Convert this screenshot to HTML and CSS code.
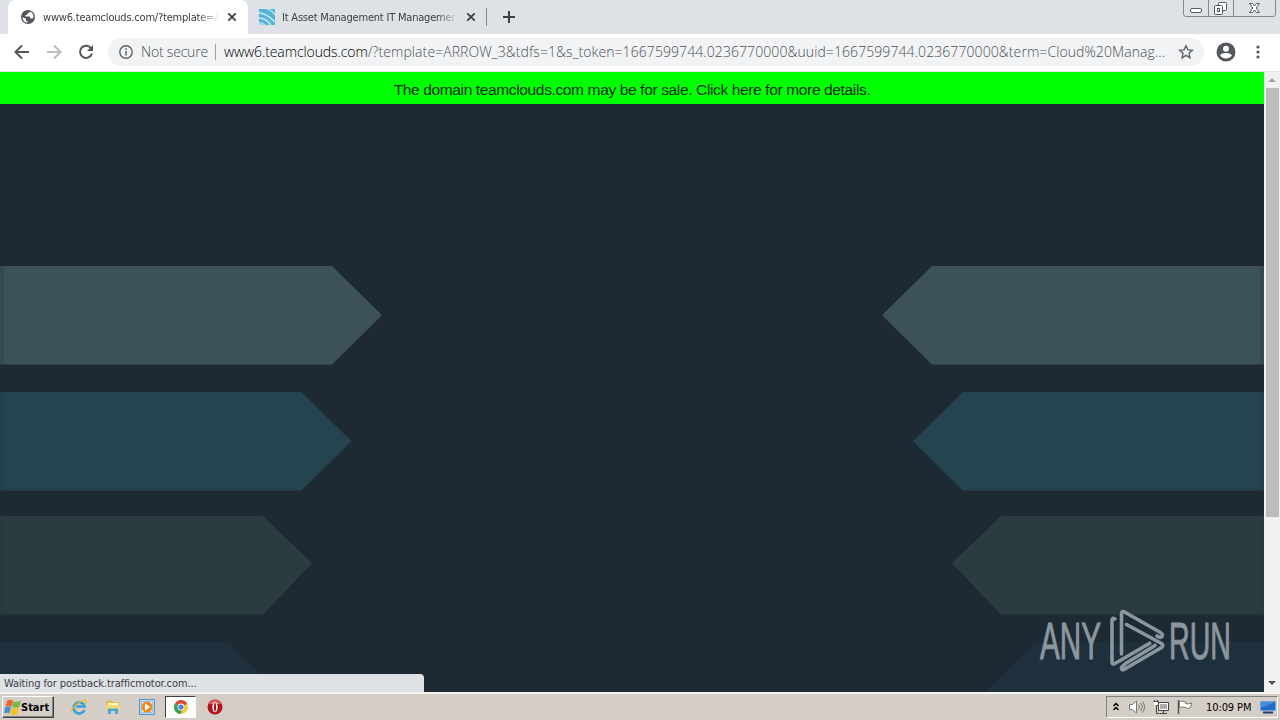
FILE: index.html
```html
<!DOCTYPE html>
<html lang="en">
<head>
    <meta charset="UTF-8">
    <title>www6.teamclouds.com</title>
    <link rel="stylesheet" href="styles.css">
</head>
<body>
    <div class="screen">
        <!-- tab strip -->
        <div class="tabs">
            <div class="tab active">
                <svg class="favicon" viewBox="0 0 16 16"><circle cx="8" cy="8" r="7" fill="#54585d"/><path d="M2.500 8.200 6 9.700v2l1.600.7v1.200C4.600 13.500 2.500 11 2.500 8.200M9.800 2.600c-.2 1.600-1.500 1.700-2.600 1.800v1.500H5.500v1.700h4l1.200 1.800h1.700c.8-.6 1.100-1 1.100-1.600 0-2.300-1.400-4.300-3.700-5.200" fill="#fff"/></svg>
                <span class="tab-title">www6.teamclouds.com/?template=A</span>
                <svg class="close" viewBox="0 0 10 10"><path d="M1.300 1.300l7.400 7.400M8.700 1.300L1.300 8.700"/></svg>
            </div>
            <div class="tab">
                <svg class="favicon" viewBox="0 0 16 16"><path fill="#57b4d8" d="M0 0h16v16H0z"/><path d="M0 4c6 0 11 4 16 9M0 9c5 0 9 3 12 7" fill="none" stroke="#c9e8f4" stroke-width="1.500"/><path d="M6 0c4 1 8 4 10 7V4L11 0M0 13c3 0 5 1 7 3H0" fill="#a6d9ee"/></svg>
                <span class="tab-title">It Asset Management IT Managemer</span>
                <svg class="close" viewBox="0 0 10 10"><path d="M1.300 1.300l7.400 7.400M8.700 1.300L1.300 8.700"/></svg>
            </div>
            <div class="tab-sep"></div>
            <svg class="new-tab" viewBox="0 0 12 12"><path d="M6 0v12M0 6h12" stroke="#3c4043" stroke-width="2"/></svg>
            <svg class="win-buttons" viewBox="0 0 94 18" fill="none">
                <path d="M.5 0v14q0 2.500 2.500 2.500h87q2.500 0 2.500-2.500V0M25.500 0v16M50.500 0v16" stroke="#85898f"/>
                <g stroke="#55595f"><rect x="7.500" y="8.500" width="11" height="4" rx="1.500" fill="#fff"/><rect x="35.500" y="2.500" width="8" height="8" rx="1" fill="#fff"/><rect x="31.500" y="5.500" width="8" height="9" rx="1" fill="#fff"/><rect x="34.500" y="8.500" width="2" height="3"/></g>
                <path d="M66.500 3.500h3l2 2.500 2-2.500h3L73.200 8l3.300 4.500h-3l-2-2.500-2 2.500h-3L69.800 8z" fill="#fff" stroke="#55595f"/>
            </svg>
        </div>

        <!-- toolbar -->
        <div class="toolbar">
            <svg class="nav back" viewBox="0 0 16 16"><path d="M15 8H2M8 1.500L1.500 8 8 14.500"/></svg>
            <svg class="nav forward" viewBox="0 0 16 16"><path d="M1 8h13M8 1.500L14.500 8 8 14.500"/></svg>
            <svg class="nav reload" viewBox="0 0 16 16"><path d="M13.300 4.500A6.100 6.100 0 1 0 14 9.500"/><path d="M15 1v6H9z" class="fill"/></svg>
            <div class="omnibox">
                <svg class="info" viewBox="0 0 14 14"><circle cx="7" cy="7" r="6.200" fill="none" stroke="#5f6368" stroke-width="1.400"/><path d="M7 6v4.500M7 3.300v1.600" stroke="#5f6368" stroke-width="1.500"/></svg>
                <span class="secure">Not secure</span>
                <span class="bar"></span>
                <span class="url"><b>www6.teamclouds.com</b>/?template=ARROW_3&amp;tdfs=1&amp;s_token=1667599744.0236770000&amp;uuid=1667599744.0236770000&amp;term=Cloud%20Manag...</span>
                <svg class="star" viewBox="0 0 16 16"><path d="M8 1.700l1.900 4.200 4.500.4-3.400 3 1 4.500L8 11.400l-4 2.400 1-4.500-3.400-3 4.500-.4z" fill="none" stroke="#5f6368" stroke-width="1.400"/></svg>
            </div>
            <svg class="avatar" viewBox="0 0 20 20"><circle cx="10" cy="10" r="9.500" fill="#54585d"/><circle cx="10" cy="6.800" r="3" fill="#fff"/><path d="M4 13.500c1-2 4-2.500 6-2.500s5 .5 6 2.500c-1.500 2-3.500 3-6 3s-4.500-1-6-3" fill="#fff"/></svg>
            <svg class="menu" viewBox="0 0 4 14"><g fill="#54585d"><circle cx="2" cy="2" r="1.600"/><circle cx="2" cy="7" r="1.600"/><circle cx="2" cy="12" r="1.600"/></g></svg>
        </div>

        <!-- page -->
        <div class="viewport">
            <div class="page">
                <div class="banner"><span>The domain teamclouds.com may be for sale. Click here for more details.</span></div>
                <div class="arrows">
                    <div class="row row-1"><i></i><i></i></div>
                    <div class="row row-2"><i></i><i></i></div>
                    <div class="row row-3"><i></i><i></i></div>
                    <div class="row row-4"><i></i><i></i></div>
                </div>
                <div class="status"><span>Waiting for postback.trafficmotor.com...</span></div>
                <svg class="watermark" viewBox="0 0 200 64">
                    <g fill="#8b969f" stroke="#8b969f" font-family="Liberation Sans Narrow, Liberation Sans, sans-serif" font-size="52">
                        <text x="3" y="48.500" textLength="61" lengthAdjust="spacingAndGlyphs">ANY</text>
                        <text x="132" y="48.500" textLength="62" lengthAdjust="spacingAndGlyphs">RUN</text>
                    </g>
                    <g fill="none" stroke="#8b969f" stroke-width="3.600" stroke-linecap="round" stroke-linejoin="round">
                        <path d="M79 10q-4-4-4 1v41q0 3 3 1.500L114 32.500" stroke-linecap="butt"/>
                        <path d="M84.500 44V4q0-3.500 3-2l36 20.500q3 2 1.500 4t-5-.5"/>
                        <path d="M89.500 14.500l35 19q2.500 2 0 4L87 59.500q-3 1-2.500-2l4-4L118 35.500"/>
                    </g>
                </svg>
            </div>
            <div class="scrollbar">
                <svg viewBox="0 0 16 16"><path d="M4 10l4-4 4 4z" fill="#a3a3a3"/></svg>
                <div class="thumb"></div>
                <svg class="down" viewBox="0 0 16 16"><path d="M4 5h8l-4 4z" fill="#505050"/></svg>
            </div>
        </div>

        <!-- taskbar -->
        <div class="taskbar">
            <div class="start">
                <svg viewBox="0 0 16 16"><path d="M3 1.500q3-1.500 5.500 0L7 7Q4 6 1.500 7z" fill="#ed622d"/><path d="M9 2q3 1.500 7-.5L14.500 7.500Q11 9 7.500 7.300z" fill="#78b843"/><path d="M1.200 7.500q2.500-1 5.500.2L5 13.500q-2.500-1.200-5 0z" fill="#468fd4"/><path d="M7.200 8Q10.500 9.800 14.200 8.200L12.500 14.500q-3 1.500-7-.5z" fill="#f5c22d"/></svg>
                <span>Start</span>
            </div>
            <div class="apps">
                <div class="app"><svg viewBox="0 0 16 16"><path d="M13.500 11a5.600 5.600 0 1 1 .2-3.500H5" fill="none" stroke="#39a1dc" stroke-width="2.600"/><path d="M1 14C-1 10 10 0 15 1.500c1 .5 0 2-.5 3" fill="none" stroke="#ebb72c" stroke-width="1.200"/></svg></div>
                <div class="app"><svg viewBox="0 0 16 16"><path d="M1 3l1-1.500h4L7.500 3H14v9H1z" fill="#e3bd4e"/><path d="M3 4h10v3H3z" fill="#fff7ce"/><path d="M1 6h14v5H1z" fill="#f2d978"/><path d="M3 15V9.500h10V15h-3v-3H6v3z" fill="#4fa8d2"/></svg></div>
                <div class="app"><svg viewBox="0 0 16 16"><path d="M.5.5h15v15H.5z" fill="#b9d8f0" stroke="#5693c9"/><path d="M2.500 2.500h11v11h-11z" fill="#eee" stroke="#9cc3e5"/><circle cx="8" cy="8" r="5.500" fill="#f18a16"/><path d="M6 4.500v7L11.500 8z" fill="#fff"/></svg></div>
                <div class="app pressed"><svg viewBox="0 0 16 16"><circle cx="8" cy="8" r="7" fill="#f6c832"/><path d="M8 8L1.940 4.500a7 7 0 0 1 12.120 0z" fill="#da4838"/><path d="M8 8L1.940 4.500A7 7 0 0 0 7.500 15L10 9z" fill="#3c9f55"/><path d="M8 4.500h6.100L8 8z" fill="#da4838"/><circle cx="8" cy="8" r="3.400" fill="#fff"/><circle cx="8" cy="8" r="2.600" fill="#4584dc"/></svg></div>
                <div class="app"><svg viewBox="0 0 16 16"><circle cx="8" cy="8" r="7.500" fill="#b71419"/><path d="M2 5a6.500 6.500 0 0 1 12 0z" fill="#dc5d59"/><ellipse cx="8" cy="8" rx="2.600" ry="5.300" fill="#fff"/><ellipse cx="8" cy="8" rx="1" ry="4.600" fill="#a50e14"/></svg></div>
            </div>
            <div class="tray">
                <svg class="chevrons" viewBox="0 0 8 10"><path d="M1.500 4l2.500-2.500L6.500 4M1.500 8l2.500-2.500L6.500 8" fill="none" stroke="#000" stroke-width="1.500"/></svg>
                <svg viewBox="0 0 16 16"><path d="M.5 5.500h3L7.500 2v12l-4-3.500h-3z" fill="#fff" stroke="#777"/><path d="M9.500 5.500q2 2.500 0 5M11.500 4q3.500 4 0 8M13.500 2.500q4 5.500 0 11" fill="none" stroke="#777"/></svg>
                <svg class="net" viewBox="0 0 16 16"><path d="M5.500 3.500h10v8h-10z" fill="#aaa" stroke="#444"/><path d="M6.500 4.500h8v6h-8z" fill="none" stroke="#fff"/><path d="M7 14.500h7M10.500 12v2" stroke="#444"/><path d="M.5 2.500h5v4h-2v8h3" fill="none" stroke="#444"/><path d="M1.500 1v3M4.500 1v3" stroke="#444"/><path d="M1 3h4v3H1z" fill="#fff"/></svg>
                <svg viewBox="0 0 16 16"><path d="M1.500 1v14" stroke="#555" stroke-width="1.500"/><path d="M2.500 2.500q3-1 6 .5v1.500q3 1 6.500-.5l-2 5q-2.500 1-5-.5-2.500-1-5.500 0z" fill="#fff" stroke="#777"/></svg>
                <span class="clock">10:09 PM</span>
                <svg class="desk" viewBox="0 0 16 16"><path d="M.5 2.500h15v9H.5z" fill="#2769c7" stroke="#6da5df"/><path d="M1 3h14L1 9z" fill="#4b8bdd"/><path d="M3 12.500h10v2H3z" fill="#263c70"/></svg>
            </div>
        </div>
    </div>
</body>
</html>
```
FILE: styles.css
```css
* { margin: 0; padding: 0; box-sizing: border-box; }
body {
    width: 1280px; height: 720px; overflow: hidden;
    font-family: "DejaVu Sans Condensed", "DejaVu Sans", sans-serif;
}
svg { display: block; flex: none; }
span { white-space: nowrap; }
.screen { display: flex; flex-direction: column; height: 720px; }

.tabs { display: flex; height: 34px; background: #dee1e6; padding-left: 8px; }
.tab { display: flex; align-items: center; width: 239px; padding: 0 10px 0 11px; }
.tab.active { width: 240px; padding-left: 12px; background: #fff; border-radius: 8px 8px 0 0; }
.favicon { width: 16px; height: 16px; margin-right: 7px; }
.tab-title {
    width: 176px; font-size: 11px; letter-spacing: -0.2px; color: #3c4043;
    mask-image: linear-gradient(90deg, #000 88%, transparent);
}
.close { width: 10px; height: 10px; margin-left: 8px; }
.close path { stroke: #3c4043; stroke-width: 1.800; }
.tab-sep { width: 1px; height: 18px; margin: 8px 16px 0 -1px; background: #85898f; }
.new-tab { width: 12px; height: 12px; margin-top: 11px; }
.win-buttons { width: 94px; height: 18px; margin: 0 3px 0 auto; }

.toolbar {
    display: flex; align-items: center; height: 38px; padding: 0 20px 2px 14px;
    background: #fff; border-bottom: 1px solid #e4e5e8;
}
.nav { width: 16px; height: 16px; margin-right: 16px; fill: none; stroke: #54585d; stroke-width: 2; }
.forward { stroke: #babcbe; }
.reload { margin-right: 14px; }
.fill { fill: #54585d; stroke: none; }
.omnibox {
    display: flex; align-items: center; width: 1096px; height: 28px;
    padding: 0 10px 0 11px; border-radius: 14px; background: #f1f3f4;
    font-family: "Open Sans", sans-serif; font-size: 14px; font-weight: 300; color: #4c5055;
}
.info { width: 14px; height: 14px; margin-right: 8px; }
.secure { width: 67px; letter-spacing: -0.2px; }
.bar { width: 1px; height: 16px; margin: 0 8px 0 7px; background: #9da0a4; }
.url { width: 941px; letter-spacing: 0.080px; }
.url b { font-weight: 300; letter-spacing: -0.1px; color: #000; }
.star { width: 16px; height: 16px; margin-left: auto; }
.avatar { width: 20px; height: 20px; margin-left: 12px; }
.menu { width: 4px; height: 14px; margin-left: auto; }

.viewport { display: flex; height: 620px; }
.page { position: relative; width: 1264px; overflow: hidden; background: #1e2a33; }
.banner {
    height: 32px; line-height: 35px; background: #0f0; text-align: center;
    font-family: "Liberation Sans", sans-serif; font-size: 15.5px; letter-spacing: -0.36px; color: #062b06;
}
.arrows { padding-top: 162px; }
.row { display: flex; justify-content: space-between; height: 98.5px; }
.row i {
    border-left: 4px solid rgba(30, 50, 62, 0.25);
    clip-path: polygon(0 0, calc(100% - 50px) 0, 100% 50%, calc(100% - 50px) 100%, 0 100%);
}
.row i:last-child { transform: scaleX(-1); }
.row-1 i { width: 382px; background: #3c5256; }
.row-2 { margin-top: 27.5px; }
.row-2 i { width: 351.5px; background: #264350; }
.row-3 { margin-top: 25.5px; }
.row-3 i {
    width: 312px; background: #2b3c41;
    clip-path: polygon(0 0, calc(100% - 49px) 0, 100% 48%, calc(100% - 49px) 100%, 0 100%);
}
.row-4 { margin-top: 27.5px; }
.row-4 i { width: 278px; background: #1f303d; }

.status {
    position: absolute; left: 0; bottom: 0; width: 424px; height: 18px;
    padding-left: 4px; line-height: 19px; font-size: 11px; letter-spacing: -0.1px; color: #3c4043;
    background: #dee1e6; border-radius: 0 4px 0 0;
}
.watermark { position: absolute; left: 1037px; top: 538px; width: 200px; height: 64px; overflow: visible; }
.scrollbar { display: flex; flex-direction: column; width: 16px; background: #f1f1f1; }
.scrollbar svg { width: 16px; height: 16px; }
.thumb { width: 13px; height: 429px; margin-left: 2px; background: #bcbcbc; }
.scrollbar .down { margin-top: auto; }

.taskbar {
    display: flex; align-items: center; height: 28px; padding: 2px 2px 2px;
    background: #d5cec6; border-top: 2px solid #f6f4f1; color: #000;
}
.start {
    display: flex; align-items: center; width: 52px; height: 22px; padding-left: 1px;
    border: 1px solid; border-color: #fff #404040 #404040 #fff; box-shadow: inset -1px -1px #808080;
    font-size: 11px; font-weight: bold;
}
.start svg { width: 17px; height: 17px; }
.apps { display: flex; gap: 3px; margin-left: 9px; }
.app { display: flex; align-items: center; justify-content: center; width: 31px; height: 22px; }
.app svg { width: 16px; height: 16px; }
.pressed { background: #fff; border: 1px solid; border-color: #404040 #fff #fff #404040; }
.tray {
    display: flex; align-items: center; width: 172px; height: 22px; margin-left: auto; padding-left: 5px;
    border: 1px solid; border-color: #808080 #fff #fff #808080;
}
.tray svg { width: 16px; height: 16px; margin-right: 8px; }
.tray .chevrons { width: 8px; height: 10px; margin-right: 9px; }
.clock { width: 46px; margin-left: 5px; font-size: 11px; letter-spacing: -0.1px; }
.tray .desk { margin: 0 0 0 8px; }
```
